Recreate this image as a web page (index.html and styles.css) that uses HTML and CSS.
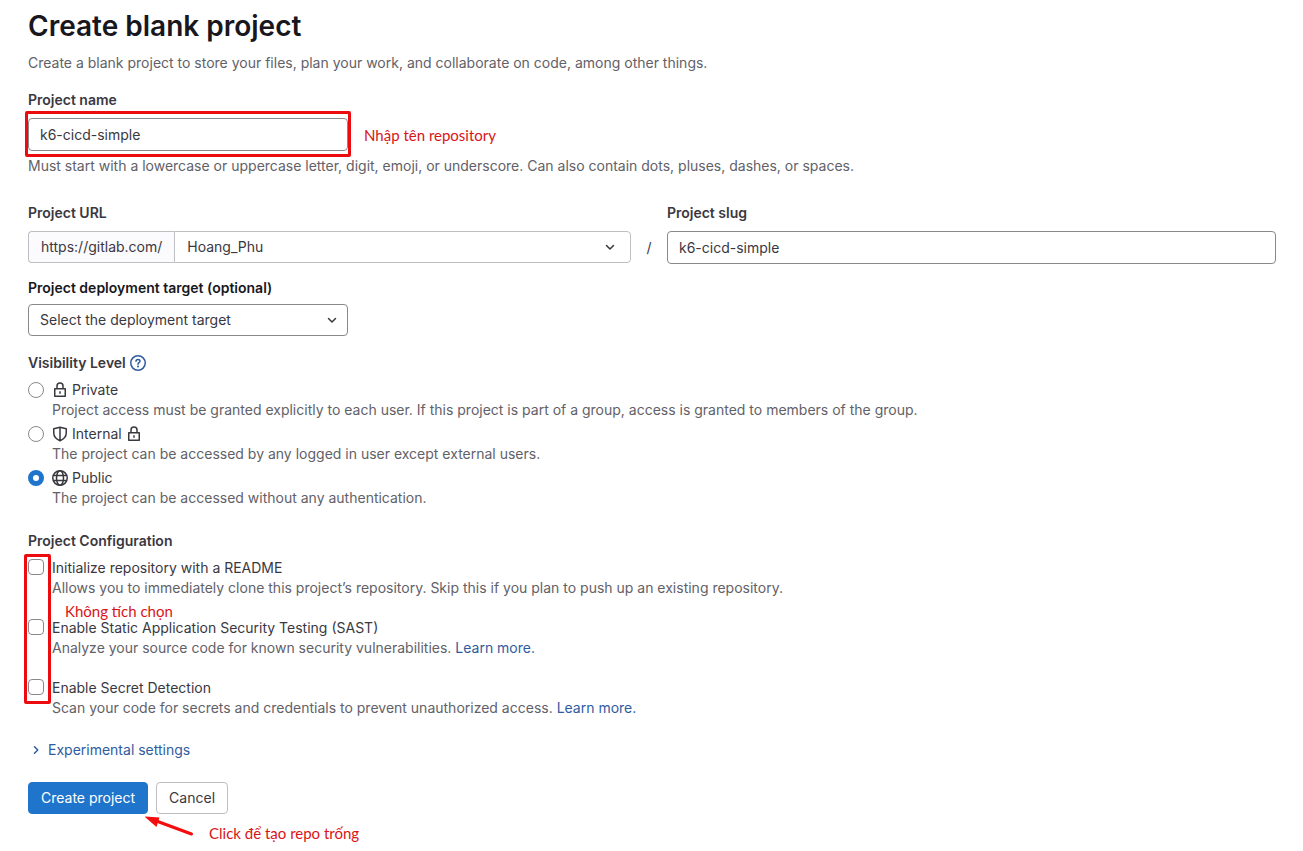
FILE: index.html
```
<!DOCTYPE html>
<html lang="en">
<head>
  <meta charset="UTF-8">
  <meta name="viewport" content="width=device-width, initial-scale=1.0">
  <title>Create blank project</title>
  <link rel="stylesheet" href="styles.css">
</head>
<body>
  <svg class="sprite" aria-hidden="true">
    <symbol id="chevron-down" viewBox="0 0 16 16"><path d="M4.5 6.5 8 10l3.500-3.500" fill="none" stroke="currentColor" stroke-width="1.500" stroke-linecap="round" stroke-linejoin="round"/></symbol>
    <symbol id="chevron-right" viewBox="0 0 16 16"><path d="M6.500 4.750 9.750 8 6.500 11.250" fill="none" stroke="currentColor" stroke-width="1.500" stroke-linecap="round" stroke-linejoin="round"/></symbol>
    <symbol id="lock" viewBox="0 0 16 16"><path d="M5 6.500V4a3 3 0 0 1 6 0v2.500M2.750 6.750h10.500v7.500H2.750z" fill="none" stroke="currentColor" stroke-width="1.500" stroke-linejoin="round"/><path d="M7.250 9.250h1.500v2.500h-1.500z" fill="currentColor"/></symbol>
    <symbol id="shield" viewBox="0 0 16 16"><path d="M8 1.250 1.750 2.750V7c0 3.500 2.300 6 6.250 7.750C11.950 13 14.250 10.500 14.250 7V2.750zM8 1.250v13.500" fill="none" stroke="currentColor" stroke-width="1.500" stroke-linejoin="round"/></symbol>
    <symbol id="earth" viewBox="0 0 16 16"><g fill="none" stroke="currentColor" stroke-width="1.500"><circle cx="8" cy="8" r="7.250"/><ellipse cx="8" cy="8" rx="3.500" ry="7.250"/><path d="M1.500 5.500h13M1.500 10.500h13"/></g></symbol>
    <symbol id="question" viewBox="0 0 16 16"><circle cx="8" cy="8" r="7.250" fill="none" stroke="currentColor" stroke-width="1.500"/><path d="M6 6.300C6 5.100 6.900 4.500 8 4.500s2 .700 2 1.700c0 1.400-2 1.500-2 2.800v.200" fill="none" stroke="currentColor" stroke-width="1.500" stroke-linecap="round"/><circle cx="8" cy="11.500" r="1" fill="currentColor"/></symbol>
  </svg>

  <main class="page">
    <h1>Create blank project</h1>
    <p class="intro">Create a blank project to store your files, plan your work, and collaborate on code, among other things.</p>

    <form onsubmit="return false">
      <div class="field">
        <label for="name">Project name</label>
        <div class="name-row">
          <div class="marked">
            <input class="control" type="text" id="name" value="k6-cicd-simple" aria-describedby="name-help">
          </div>
          <span class="note">Nhập tên repository</span>
        </div>
        <p class="help" id="name-help">Must start with a lowercase or uppercase letter, digit, emoji, or underscore. Can also contain dots, pluses, dashes, or spaces.</p>
      </div>

      <div class="path">
        <div class="field">
          <label for="namespace">Project URL</label>
          <div class="group">
            <span class="prefix">https://gitlab.com/</span>
            <div class="select">
              <select id="namespace"><option>Hoang_Phu</option></select>
              <svg class="icon"><use href="#chevron-down"/></svg>
            </div>
          </div>
        </div>
        <span class="slash">/</span>
        <div class="field">
          <label for="slug">Project slug</label>
          <input class="control" type="text" id="slug" value="k6-cicd-simple">
        </div>
      </div>

      <div class="field target">
        <label for="target">Project deployment target (optional)</label>
        <div class="select">
          <select id="target"><option>Select the deployment target</option></select>
          <svg class="icon"><use href="#chevron-down"/></svg>
        </div>
      </div>

      <fieldset class="visibility">
        <legend>Visibility Level <a class="help-link" href="#" aria-label="Help"><svg class="icon"><use href="#question"/></svg></a></legend>
        <div class="option">
          <input type="radio" name="visibility" id="private">
          <label for="private"><svg class="icon"><use href="#lock"/></svg>Private</label>
          <p>Project access must be granted explicitly to each user. If this project is part of a group, access is granted to members of the group.</p>
        </div>
        <div class="option">
          <input type="radio" name="visibility" id="internal">
          <label for="internal"><svg class="icon"><use href="#shield"/></svg>Internal <svg class="icon"><use href="#lock"/></svg></label>
          <p>The project can be accessed by any logged in user except external users.</p>
        </div>
        <div class="option">
          <input type="radio" name="visibility" id="public" checked>
          <label for="public"><svg class="icon"><use href="#earth"/></svg>Public</label>
          <p>The project can be accessed without any authentication.</p>
        </div>
      </fieldset>

      <fieldset class="config">
        <legend>Project Configuration</legend>
        <div class="checks">
          <div class="option">
            <input type="checkbox" id="readme">
            <label for="readme">Initialize repository with a README</label>
            <p>Allows you to immediately clone this project’s repository. Skip this if you plan to push up an existing repository.</p>
          </div>
          <div class="option">
            <input type="checkbox" id="sast">
            <label for="sast">Enable Static Application Security Testing (SAST)</label>
            <p>Analyze your source code for known security vulnerabilities. <a href="#">Learn more.</a></p>
          </div>
          <div class="option">
            <input type="checkbox" id="secret">
            <label for="secret">Enable Secret Detection</label>
            <p>Scan your code for secrets and credentials to prevent unauthorized access. <a href="#">Learn more.</a></p>
          </div>
          <span class="note note-checks">Không tích chọn</span>
        </div>
      </fieldset>

      <button class="expand" type="button"><svg class="icon"><use href="#chevron-right"/></svg>Experimental settings</button>

      <div class="actions">
        <button class="btn btn-confirm" type="submit">Create project</button>
        <button class="btn" type="button">Cancel</button>
        <div class="pointer">
          <svg width="50" height="28" viewBox="0 0 50 28" aria-hidden="true">
            <path d="M10 5.500 46.500 19" stroke="#f30d0d" stroke-width="3" stroke-linecap="round"/>
            <path d="M-.500 1.500 14.500 2.500 11.500 12z" fill="#f30d0d"/>
          </svg>
          <span class="note">Click để tạo repo trống</span>
        </div>
      </div>
    </form>
  </main>
</body>
</html>
```
FILE: styles.css
```
* { box-sizing: border-box; }
body { margin: 0; background: #fff; color: #3a383f; font: 14px/20px Inter, "Noto Sans", sans-serif; }
h1, p, fieldset, legend { margin: 0; padding: 0; border: 0; }
input, select, button { margin: 0; font: inherit; color: inherit; }
a { color: #2f5ca0; text-decoration: none; }

.sprite { position: absolute; width: 0; height: 0; }
.icon { width: 16px; height: 16px; flex: none; }

.page { padding: 8px 27px 37px 28px; }
h1 { font-size: 28px; line-height: 36px; font-weight: 600; color: #18171d; }
.intro { margin: 9px 0 17px; }
.intro, .help, .option p { color: #626168; }

.field > label, legend { display: block; font-weight: 600; }
.field > label { margin-bottom: 8px; }
.control { display: block; width: 100%; height: 33px; padding: 0 11px; border: 1px solid #89888d; border-radius: 4px; background: #fff; }
.name-row { display: flex; align-items: center; gap: 16px; }
.help { margin-top: 5px; }

/* red review marks */
.marked { position: relative; width: 320px; }
.marked::after, .checks::before { content: ""; position: absolute; box-sizing: border-box; border: 3px solid #ec0b0f; border-radius: 2px; pointer-events: none; }
.marked::after { inset: -7px -3px -6px; }
.note { color: #d91418; font: 15px/20px Lato, "Noto Sans", sans-serif; white-space: nowrap; }

.path { display: grid; grid-template-columns: 99fr 36px 100fr; margin-top: 27px; }
.slash { align-self: end; text-align: center; line-height: 33px; }
.group { display: flex; }
.prefix { padding: 5px 12px; border: 1px solid #bfbfc3; border-right: 0; border-radius: 4px 0 0 4px; background: #fbfafd; }
.select { position: relative; flex: 1; }
.select select { display: block; width: 100%; height: 32px; padding: 0 32px 0 11px; appearance: none; border: 1px solid #89888d; border-radius: 4px; background: #fff; }
.select .icon { position: absolute; top: 8px; right: 8px; pointer-events: none; }
.group select { padding-left: 12px; border-color: #bfbfc3; border-radius: 0 4px 4px 0; }
.group .icon { right: 13px; }

.target { width: 320px; margin-top: 14px; }
.target > label { margin-bottom: 6px; color: #18171d; }

.visibility { margin-top: 17px; }
.visibility legend, .help-link, .option label { display: flex; align-items: center; gap: 4px; }
.option { display: grid; grid-template-columns: 16px 1fr; column-gap: 8px; align-items: center; }
.option p { grid-column: 2; }
.option input { appearance: none; width: 16px; height: 16px; border: 1px solid #89888d; background: #fff; }
.option input[type="radio"] { border-radius: 50%; }
.option input[type="radio"]:checked { border: 5px solid #1f75cb; }
.option input[type="checkbox"] { border-radius: 4px; align-self: start; margin-top: 1px; }
.visibility .option { margin-bottom: 3px; }
.visibility .option label { line-height: 21px; }
.visibility legend { margin-bottom: 6px; }

.config { margin-top: 20px; }
.checks { position: relative; display: grid; gap: 20px; margin-top: 7px; }
.checks::before { top: -4px; left: -4px; width: 27px; height: 150px; }
.note-checks { position: absolute; top: 43px; left: 37px; }

.expand { display: flex; align-items: center; gap: 4px; margin-top: 22px; padding: 0; border: 0; background: none; color: #2f5ca0; }
.actions { position: relative; display: flex; gap: 8px; margin-top: 22px; }
.btn { height: 32px; padding: 0 12px; border: 1px solid #bfbfc3; border-radius: 4px; background: #fff; }
.btn-confirm { border-color: #1f75cb; background: #1f75cb; color: #fff; }
.pointer { position: absolute; top: 33px; left: 117px; display: flex; align-items: flex-end; gap: 14px; }
```
